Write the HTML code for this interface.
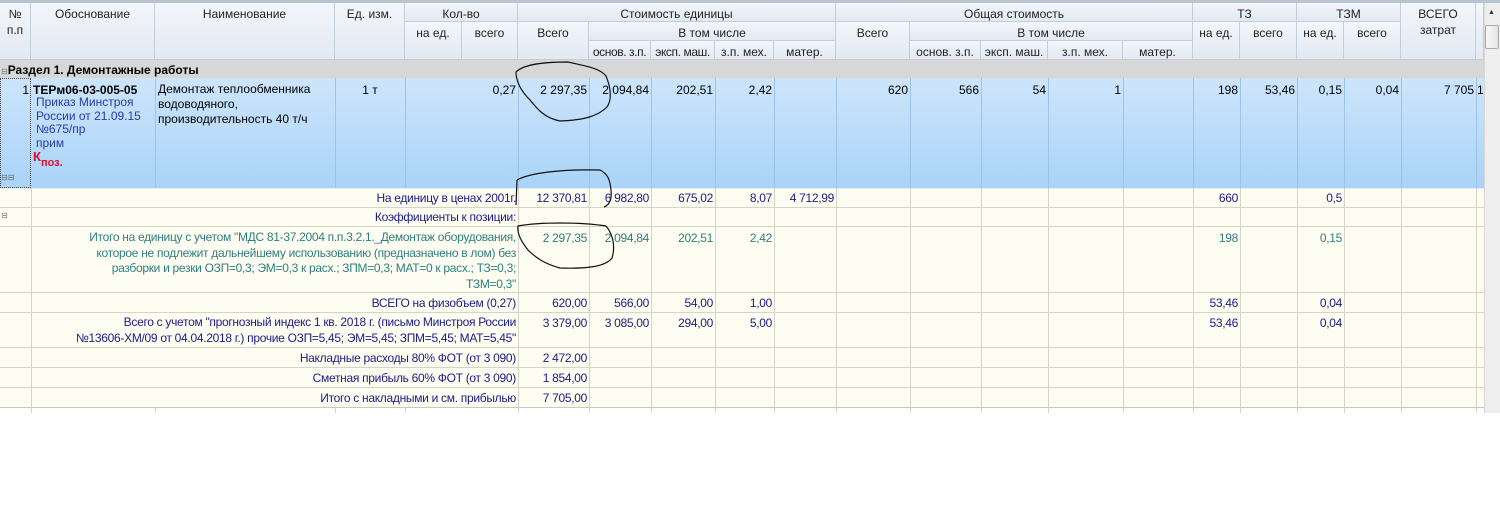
<!DOCTYPE html>
<html><head><meta charset="utf-8"><style>
*{margin:0;padding:0;box-sizing:border-box}
body{width:1500px;height:510px;background:#fff;position:relative;overflow:hidden;font-family:"Liberation Sans","DejaVu Sans",sans-serif;font-size:12px;color:#000}
.a{position:absolute}
.h{position:absolute;background:linear-gradient(#f3f6fb,#e2e9f2);border-right:1px solid #c3cedb;border-bottom:1px solid #c3cedb;text-align:center;color:#222;font-size:12px;line-height:16px;padding-top:3px}
.v{position:absolute;width:1px}
.hl{position:absolute;height:1px;left:0;width:1484px;background:#d4d4c8}
.t{position:absolute;text-align:right;white-space:nowrap;line-height:16px;letter-spacing:-0.3px}
.m{letter-spacing:0}
.b{color:#1c1c8a}
.g{color:#2f7f7f}
</style></head><body>
<div class="a" style="left:0;top:0;width:1500px;height:3px;background:#b9c4d2"></div>
<!-- header -->
<div class="h" style="left:0;top:3px;width:31px;height:57px">№<br>п.п</div>
<div class="h" style="left:31px;top:3px;width:124px;height:57px">Обоснование</div>
<div class="h" style="left:155px;top:3px;width:180px;height:57px">Наименование</div>
<div class="h" style="left:335px;top:3px;width:70px;height:57px">Ед. изм.</div>
<div class="h" style="left:405px;top:3px;width:113px;height:19px">Кол-во</div>
<div class="h" style="left:405px;top:22px;width:57px;height:38px">на ед.</div>
<div class="h" style="left:462px;top:22px;width:56px;height:38px">всего</div>
<div class="h" style="left:518px;top:3px;width:318px;height:19px">Стоимость единицы</div>
<div class="h" style="left:518px;top:22px;width:71px;height:38px">Всего</div>
<div class="h" style="left:589px;top:22px;width:247px;height:19px">В том числе</div>
<div class="h" style="left:589px;top:41px;width:62px;height:19px;letter-spacing:-0.4px">основ. з.п.</div>
<div class="h" style="left:651px;top:41px;width:64px;height:19px;letter-spacing:-0.4px">эксп. маш.</div>
<div class="h" style="left:715px;top:41px;width:59px;height:19px">з.п. мех.</div>
<div class="h" style="left:774px;top:41px;width:62px;height:19px">матер.</div>
<div class="h" style="left:836px;top:3px;width:357px;height:19px">Общая стоимость</div>
<div class="h" style="left:836px;top:22px;width:74px;height:38px">Всего</div>
<div class="h" style="left:910px;top:22px;width:283px;height:19px">В том числе</div>
<div class="h" style="left:910px;top:41px;width:71px;height:19px">основ. з.п.</div>
<div class="h" style="left:981px;top:41px;width:67px;height:19px">эксп. маш.</div>
<div class="h" style="left:1048px;top:41px;width:75px;height:19px">з.п. мех.</div>
<div class="h" style="left:1123px;top:41px;width:70px;height:19px">матер.</div>
<div class="h" style="left:1193px;top:3px;width:104px;height:19px">ТЗ</div>
<div class="h" style="left:1193px;top:22px;width:47px;height:38px">на ед.</div>
<div class="h" style="left:1240px;top:22px;width:57px;height:38px">всего</div>
<div class="h" style="left:1297px;top:3px;width:104px;height:19px">ТЗМ</div>
<div class="h" style="left:1297px;top:22px;width:47px;height:38px">на ед.</div>
<div class="h" style="left:1344px;top:22px;width:57px;height:38px">всего</div>
<div class="h" style="left:1401px;top:3px;width:75px;height:57px">ВСЕГО<br>затрат</div>
<div class="h" style="left:1476px;top:3px;width:8px;height:57px"></div>
<!-- scrollbar -->
<div class="a" style="left:1484px;top:3px;width:16px;height:410px;background:#eeeeee;border-left:1px solid #d8d8d8"></div>
<div class="a" style="left:1488px;top:9px;font-size:7px;color:#333">▲</div>
<div class="a" style="left:1485px;top:25px;width:14px;height:24px;background:linear-gradient(90deg,#f8f8f8,#e4e4e4);border:1px solid #aaa;border-radius:2px"></div>
<!-- section row -->
<div class="a" style="left:0;top:60px;width:1484px;height:18px;background:#d7d7d7"></div>
<div class="a" style="left:1px;top:62px;font-size:12px;font-weight:bold;line-height:16px"><span style="font-size:8px;color:#777;font-weight:normal">⊟</span>Раздел 1. Демонтажные работы</div>
<!-- main row -->
<div class="a" style="left:0;top:78px;width:1484px;height:110px;background:linear-gradient(#cde5fb,#a9d3f8)"></div>
<div class="a" style="left:0;top:78px;width:31px;height:110px;border:1px dotted #445"></div>
<div class="v" style="left:155px;top:78px;height:110px;background:#9fc3e4"></div>
<div class="v" style="left:335px;top:78px;height:110px;background:#9fc3e4"></div>
<div class="v" style="left:405px;top:78px;height:110px;background:#9fc3e4"></div>
<div class="v" style="left:518px;top:78px;height:110px;background:#9fc3e4"></div>
<div class="v" style="left:589px;top:78px;height:110px;background:#9fc3e4"></div>
<div class="v" style="left:651px;top:78px;height:110px;background:#9fc3e4"></div>
<div class="v" style="left:715px;top:78px;height:110px;background:#9fc3e4"></div>
<div class="v" style="left:774px;top:78px;height:110px;background:#9fc3e4"></div>
<div class="v" style="left:836px;top:78px;height:110px;background:#9fc3e4"></div>
<div class="v" style="left:910px;top:78px;height:110px;background:#9fc3e4"></div>
<div class="v" style="left:981px;top:78px;height:110px;background:#9fc3e4"></div>
<div class="v" style="left:1048px;top:78px;height:110px;background:#9fc3e4"></div>
<div class="v" style="left:1123px;top:78px;height:110px;background:#9fc3e4"></div>
<div class="v" style="left:1193px;top:78px;height:110px;background:#9fc3e4"></div>
<div class="v" style="left:1240px;top:78px;height:110px;background:#9fc3e4"></div>
<div class="v" style="left:1297px;top:78px;height:110px;background:#9fc3e4"></div>
<div class="v" style="left:1344px;top:78px;height:110px;background:#9fc3e4"></div>
<div class="v" style="left:1401px;top:78px;height:110px;background:#9fc3e4"></div>
<div class="v" style="left:1476px;top:78px;height:110px;background:#9fc3e4"></div>
<div class="a" style="left:1px;top:173px;font-size:8px;color:#667">⊟⊟</div>
<div class="t m" style="left:0;width:29px;top:82px">1</div>
<div class="a" style="left:33px;top:82px;font-weight:bold;line-height:16px">ТЕРм06-03-005-05</div>
<div class="a" style="left:36px;top:96px;color:#2a3aa8;line-height:13.5px">Приказ Минстроя<br>России от 21.09.15<br>№675/пр<br>прим</div>
<div class="a" style="left:33px;top:149px;color:#e0102a;font-weight:bold;font-size:13px">К<span style="font-size:11px;position:relative;top:5px">поз.</span></div>
<div class="a" style="left:158px;top:82px;line-height:15px">Демонтаж теплообменника<br>водоводяного,<br>производительность 40 т/ч</div>
<div class="a" style="left:335px;width:70px;top:82px;text-align:center;line-height:16px">1 т</div>
<div class="t m" style="left:462px;width:54px;top:82px">0,27</div>
<div class="t m" style="left:518px;width:69px;top:82px">2 297,35</div>
<div class="t m" style="left:589px;width:60px;top:82px">2 094,84</div>
<div class="t m" style="left:651px;width:62px;top:82px">202,51</div>
<div class="t m" style="left:715px;width:57px;top:82px">2,42</div>
<div class="t m" style="left:836px;width:72px;top:82px">620</div>
<div class="t m" style="left:910px;width:69px;top:82px">566</div>
<div class="t m" style="left:981px;width:65px;top:82px">54</div>
<div class="t m" style="left:1048px;width:73px;top:82px">1</div>
<div class="t m" style="left:1193px;width:45px;top:82px">198</div>
<div class="t m" style="left:1240px;width:55px;top:82px">53,46</div>
<div class="t m" style="left:1297px;width:45px;top:82px">0,15</div>
<div class="t m" style="left:1344px;width:55px;top:82px">0,04</div>
<div class="t m" style="left:1401px;width:73px;top:82px">7 705</div>
<div class="a" style="left:1477px;top:82px;line-height:16px">1</div>
<!-- yellow area -->
<div class="a" style="left:0;top:188px;width:1484px;height:220px;background:#fdfdf1"></div>
<div class="a" style="left:0;top:408px;width:1484px;height:6px;background:#fff"></div>
<div class="hl" style="top:188px;background:#e6eef6"></div>
<div class="hl" style="top:207px"></div>
<div class="hl" style="top:226px"></div>
<div class="hl" style="top:292px"></div>
<div class="hl" style="top:312px"></div>
<div class="hl" style="top:347px"></div>
<div class="hl" style="top:367px"></div>
<div class="hl" style="top:387px"></div>
<div class="hl" style="top:407px;background:#c8c8c0"></div>
<div class="v" style="left:31px;top:188px;height:225px;background:#d4d4c8"></div>
<div class="v" style="left:518px;top:188px;height:225px;background:#d4d4c8"></div>
<div class="v" style="left:589px;top:188px;height:225px;background:#d4d4c8"></div>
<div class="v" style="left:651px;top:188px;height:225px;background:#d4d4c8"></div>
<div class="v" style="left:715px;top:188px;height:225px;background:#d4d4c8"></div>
<div class="v" style="left:774px;top:188px;height:225px;background:#d4d4c8"></div>
<div class="v" style="left:836px;top:188px;height:225px;background:#d4d4c8"></div>
<div class="v" style="left:910px;top:188px;height:225px;background:#d4d4c8"></div>
<div class="v" style="left:981px;top:188px;height:225px;background:#d4d4c8"></div>
<div class="v" style="left:1048px;top:188px;height:225px;background:#d4d4c8"></div>
<div class="v" style="left:1123px;top:188px;height:225px;background:#d4d4c8"></div>
<div class="v" style="left:1193px;top:188px;height:225px;background:#d4d4c8"></div>
<div class="v" style="left:1240px;top:188px;height:225px;background:#d4d4c8"></div>
<div class="v" style="left:1297px;top:188px;height:225px;background:#d4d4c8"></div>
<div class="v" style="left:1344px;top:188px;height:225px;background:#d4d4c8"></div>
<div class="v" style="left:1401px;top:188px;height:225px;background:#d4d4c8"></div>
<div class="v" style="left:1476px;top:188px;height:225px;background:#d4d4c8"></div>
<div class="v" style="left:155px;top:408px;height:5px;background:#d4d4c8"></div>
<div class="v" style="left:335px;top:408px;height:5px;background:#d4d4c8"></div>
<div class="v" style="left:405px;top:408px;height:5px;background:#d4d4c8"></div>
<div class="a" style="left:1px;top:211px;font-size:8px;color:#777">⊟</div>
<!-- row texts -->
<div class="t b" style="left:31px;width:485px;top:190px">На единицу в ценах 2001г.</div>
<div class="t b" style="left:518px;width:69px;top:190px">12 370,81</div>
<div class="t b" style="left:589px;width:60px;top:190px">6 982,80</div>
<div class="t b" style="left:651px;width:62px;top:190px">675,02</div>
<div class="t b" style="left:715px;width:57px;top:190px">8,07</div>
<div class="t b" style="left:774px;width:60px;top:190px">4 712,99</div>
<div class="t b" style="left:1193px;width:45px;top:190px">660</div>
<div class="t b" style="left:1297px;width:45px;top:190px">0,5</div>
<div class="t b" style="left:31px;width:485px;top:209px">Коэффициенты к позиции:</div>
<div class="t g" style="left:31px;width:485px;top:230px;line-height:15.5px">Итого на единицу с учетом "МДС 81-37.2004 п.п.3.2.1._Демонтаж оборудования,<br>которое не подлежит дальнейшему использованию (предназначено в лом) без<br>разборки и резки ОЗП=0,3; ЭМ=0,3 к расх.; ЗПМ=0,3; МАТ=0 к расх.; ТЗ=0,3;<br>ТЗМ=0,3"</div>
<div class="t g" style="left:518px;width:69px;top:230px">2 297,35</div>
<div class="t g" style="left:589px;width:60px;top:230px">2 094,84</div>
<div class="t g" style="left:651px;width:62px;top:230px">202,51</div>
<div class="t g" style="left:715px;width:57px;top:230px">2,42</div>
<div class="t g" style="left:1193px;width:45px;top:230px">198</div>
<div class="t g" style="left:1297px;width:45px;top:230px">0,15</div>
<div class="t b" style="left:31px;width:485px;top:295px">ВСЕГО на физобъем (0,27)</div>
<div class="t b" style="left:518px;width:69px;top:295px">620,00</div>
<div class="t b" style="left:589px;width:60px;top:295px">566,00</div>
<div class="t b" style="left:651px;width:62px;top:295px">54,00</div>
<div class="t b" style="left:715px;width:57px;top:295px">1,00</div>
<div class="t b" style="left:1193px;width:45px;top:295px">53,46</div>
<div class="t b" style="left:1297px;width:45px;top:295px">0,04</div>
<div class="t b" style="left:31px;width:485px;top:315px;line-height:15.5px">Всего с учетом "прогнозный индекс 1 кв. 2018 г. (письмо Минстроя России<br>№13606-ХМ/09 от 04.04.2018 г.) прочие ОЗП=5,45; ЭМ=5,45; ЗПМ=5,45; МАТ=5,45"</div>
<div class="t b" style="left:518px;width:69px;top:315px">3 379,00</div>
<div class="t b" style="left:589px;width:60px;top:315px">3 085,00</div>
<div class="t b" style="left:651px;width:62px;top:315px">294,00</div>
<div class="t b" style="left:715px;width:57px;top:315px">5,00</div>
<div class="t b" style="left:1193px;width:45px;top:315px">53,46</div>
<div class="t b" style="left:1297px;width:45px;top:315px">0,04</div>
<div class="t b" style="left:31px;width:485px;top:350px">Накладные расходы 80% ФОТ (от 3 090)</div>
<div class="t b" style="left:518px;width:69px;top:350px">2 472,00</div>
<div class="t b" style="left:31px;width:485px;top:370px">Сметная прибыль 60% ФОТ (от 3 090)</div>
<div class="t b" style="left:518px;width:69px;top:370px">1 854,00</div>
<div class="t b" style="left:31px;width:485px;top:390px">Итого с накладными и см. прибылью</div>
<div class="t b" style="left:518px;width:69px;top:390px">7 705,00</div>
<!-- hand-drawn ellipses -->
<svg class="a" style="left:0;top:0" width="1500" height="510" fill="none" stroke="#111" stroke-width="1.2">
<path d="M516 72 C525 63 550 62 568 62 C585 66 600 68 606 76 C611 88 612 100 607 107 C598 116 585 120 560 121 C545 118 538 110 530 100 C522 92 516 82 516 72 Z"/>
<path d="M517 180 C530 173 560 169 600 170 C608 174 610 180 611 190 C612 198 610 205 604 207 M517 180 L516 205"/>
<path d="M606 226 C612 233 616 245 612 258 C606 266 590 269 560 268 C545 264 536 258 528 250 C520 240 517 232 518 226 C540 222 580 222 606 226"/>
</svg>
</body></html>
